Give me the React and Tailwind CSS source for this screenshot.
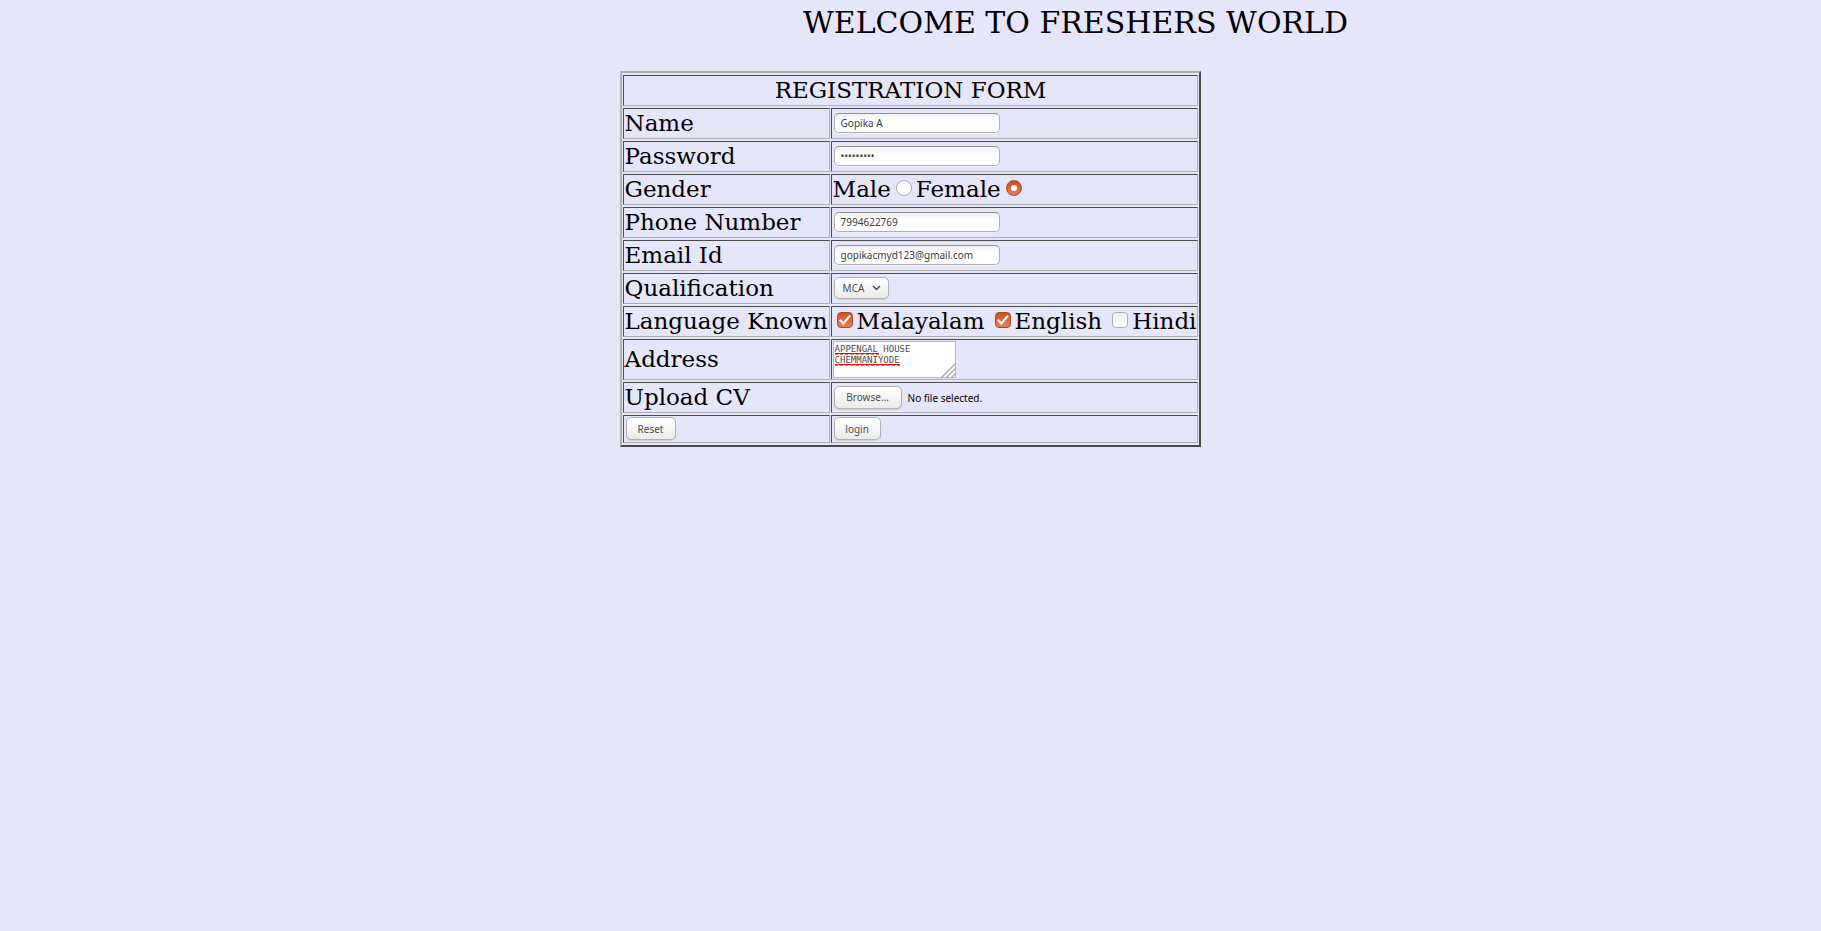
const serif = "font-['DejaVu_Serif',serif]";
const fieldClass =
  "block mb-0.5 h-5 w-[166px] rounded-[5px] border border-[#b1b0ae] border-t-[#92918f] bg-linear-to-b from-[#f1f1f1] to-white to-40% px-1.5 font-['Noto_Sans',sans-serif] text-[10px] leading-4 text-[#3c3c3c] shadow-[0_1px_0_#f2f2fb] outline-none";
const buttonClass =
  "flex mb-px h-[23px] items-center justify-center rounded-[5px] border border-[#b2b1af] bg-linear-to-b from-white to-[#ebebea] font-['Noto_Sans',sans-serif] text-[10px] leading-4 text-[#4c4c4c] shadow-[0_1px_1px_#d0d0dc]";
const cellClass =
  "border border-t-[#4b4b4b] border-l-[#4b4b4b] border-r-[#b0b0b0] border-b-[#b0b0b0] p-px";

function Row({ label, htmlFor, children, height = "h-[31px]" }) {
  return (
    <tr>
      <th scope="row" className={`${cellClass} ${height} text-left font-normal whitespace-nowrap`}>
        {htmlFor ? <label htmlFor={htmlFor}>{label}</label> : label}
      </th>
      <td className={cellClass}>{children}</td>
    </tr>
  );
}

function Language({ id, label, checked }) {
  return (
    <span className="flex items-center gap-1">
      <span className="relative mb-1 flex size-4">
        <input
          id={id}
          type="checkbox"
          name="language"
          defaultChecked={checked}
          className="peer size-4 appearance-none rounded-[4px] border border-[#b0afad] bg-linear-to-b from-[#f2f2f2] to-white checked:border-[#a44a25] checked:from-[#d2501c] checked:to-[#e58058]"
        />
        <svg viewBox="0 0 16 16" className="pointer-events-none absolute inset-0 hidden size-4 peer-checked:block" fill="none" stroke="white" strokeWidth="2.2">
          <path d="M2.8 7.8 6.3 11.6 13 3.6" />
        </svg>
      </span>
      <label htmlFor={id}>{label}</label>
    </span>
  );
}

function Gender({ id, label, checked }) {
  return (
    <span className="flex items-center gap-[5px]">
      <label htmlFor={id}>{label}</label>
      <span className="relative mb-1 flex size-4">
        <input
          id={id}
          type="radio"
          name="gender"
          defaultChecked={checked}
          className="peer size-4 appearance-none rounded-full border border-[#b0afad] bg-linear-to-b from-[#f8f8f8] to-white checked:border-[#b04a20] checked:from-[#cf4b17] checked:to-[#e58058]"
        />
        <svg viewBox="0 0 16 16" className="pointer-events-none absolute inset-0 hidden size-4 peer-checked:block" fill="white">
          <circle cx="8" cy="8" r="3" />
        </svg>
      </span>
    </span>
  );
}

function SpellingMark({ className }) {
  return (
    <span className={`pointer-events-none absolute left-0.5 h-0.5 border-t border-t-[#f00] ${className}`}>
      <span className="block border-t border-dashed border-t-[#f66]" />
    </span>
  );
}

export default function App() {
  return (
    <main className={`min-h-screen bg-[#e6e6fa] text-black ${serif}`}>
      <h1 className="pt-[5px] pl-[330px] text-center text-[30px] leading-9">
        WELCOME TO FRESHERS WORLD
      </h1>
      <form className="pt-[30px]" onSubmit={(e) => e.preventDefault()}>
        <table className="mx-auto border-separate border-spacing-x-px border-spacing-y-0.5 border-2 border-t-[#b0b0b0] border-l-[#b0b0b0] border-r-[#4b4b4b] border-b-[#4b4b4b] text-[23px] leading-[27px]">
          <tbody>
            <tr>
              <th colSpan={2} className={`${cellClass} h-[31px] text-center font-normal`}>
                REGISTRATION FORM
              </th>
            </tr>
            <Row label="Name" htmlFor="name">
              <input id="name" type="text" defaultValue="Gopika A" className={`${fieldClass} ml-px`} />
            </Row>
            <Row label="Password" htmlFor="password">
              <input id="password" type="password" defaultValue="gopika123" className={`${fieldClass} ml-px`} />
            </Row>
            <Row label="Gender">
              <div className="flex gap-1 pr-2">
                <Gender id="male" label="Male" />
                <Gender id="female" label="Female" checked />
              </div>
            </Row>
            <Row label="Phone Number" htmlFor="phone">
              <input id="phone" type="text" defaultValue="7994622769" className={`${fieldClass} ml-px`} />
            </Row>
            <Row label="Email Id" htmlFor="email">
              <input id="email" type="email" defaultValue="gopikacmyd123@gmail.com" className={`${fieldClass} ml-px`} />
            </Row>
            <Row label="Qualification" htmlFor="qualification">
              <div className="relative mb-0.5 ml-px flex w-[55px]">
                <select
                  id="qualification"
                  defaultValue="MCA"
                  className="h-[22px] w-full appearance-none rounded-[5px] border border-[#b2b1af] bg-linear-to-b from-white to-[#ebebea] pl-2 font-['Noto_Sans',sans-serif] text-[10px] leading-4 text-[#4c4c4c] shadow-[0_1px_1px_#d0d0dc]"
                >
                  <option>MCA</option>
                </select>
                <svg viewBox="0 0 9 6" className="pointer-events-none absolute top-2 right-2 h-1.5 w-[9px]" fill="none" stroke="#4c4c4c" strokeWidth="1.5">
                  <path d="M1 1 4.5 4.5 8 1" />
                </svg>
              </div>
            </Row>
            <Row label="Language Known">
              <div className="flex gap-2.5 pl-1 whitespace-nowrap">
                <Language id="malayalam" label="Malayalam" checked />
                <Language id="english" label="English" checked />
                <Language id="hindi" label="Hindi" />
              </div>
            </Row>
            <Row label="Address" htmlFor="address" height="h-[41px]">
              <div className="relative flex w-[123px]">
                <textarea
                  id="address"
                  defaultValue={"APPENGAL HOUSE\nCHEMMANIYODE"}
                  className="h-[37px] w-full resize-none overflow-hidden border border-[#b8b8b8] bg-white px-px py-0.5 font-['DejaVu_Sans_Mono',monospace] text-[9px] leading-[11px] text-[#4c4c4c] outline-none"
                />
                <SpellingMark className="top-3 w-11" />
                <SpellingMark className="top-[23px] w-[65px]" />
                <svg viewBox="0 0 15 15" className="pointer-events-none absolute right-0 bottom-0 size-[15px]" fill="none" stroke="#a8a8a8" strokeWidth="1.3">
                  <path d="M0 15 15 0M5 15 15 5M10 15 15 10" />
                </svg>
              </div>
            </Row>
            <Row label="Upload CV" htmlFor="cv">
              <div className="ml-px flex items-center gap-1.5">
                <input id="cv" type="file" className="sr-only" />
                <button type="button" className={`${buttonClass} w-[68px]`} onClick={() => document.getElementById("cv").click()}>
                  Browse…
                </button>
                <span className="font-['Noto_Sans',sans-serif] text-[10px] leading-4">No file selected.</span>
              </div>
            </Row>
            <tr>
              <td className={`${cellClass} h-7`}>
                <button type="reset" className={`${buttonClass} ml-px w-[50px]`}>
                  Reset
                </button>
              </td>
              <td className={cellClass}>
                <button type="submit" className={`${buttonClass} ml-px w-[47px]`}>
                  login
                </button>
              </td>
            </tr>
          </tbody>
        </table>
      </form>
    </main>
  );
}
